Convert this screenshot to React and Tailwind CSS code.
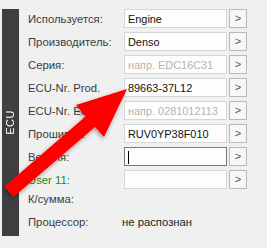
import React from "react";

const rows = [
    { label: "Используется:", value: "Engine" },
    { label: "Производитель:", value: "Denso" },
    { label: "Серия:", placeholder: "напр. EDC16C31" },
    { label: "ECU-Nr. Prod.", value: "89663-37L12" },
    { label: "ECU-Nr. ECU", placeholder: "напр. 0281012113" },
    { label: "Прошивка:", value: "RUV0YP38F010" },
    { label: "Версия:", focused: true },
    { label: "User 11:", green: true },
];

const FieldRow = ({ row }) => (
    <div className="flex items-center h-[19px]">
        <div className={`w-[96px] pt-[3px] whitespace-nowrap ${row.green ? "text-[#1a8a1a]" : "text-[#3c3c3c]"}`}>
            {row.label}
        </div>
        <div
            className={`w-[103px] h-[19px] flex items-center px-[3px] pt-px text-[10.9px] bg-[#fdfdfd] border whitespace-nowrap overflow-hidden ${
                row.focused ? "border-[#7a7a7a]" : "border-[#d6d6d6]"
            }`}
        >
            {row.focused && <span className="w-px h-[13px] bg-black" />}
            {row.value && <span className="text-[#111]">{row.value}</span>}
            {row.placeholder && <span className="text-[#b4b4b4]">{row.placeholder}</span>}
        </div>
        <button className="ml-[2px] w-[18px] h-[19px] flex items-center justify-center bg-[#f7f7f7] border border-[#b9b9b9] text-[#555] text-[11px] leading-none">
            &gt;
        </button>
    </div>
);

const App = () => {
    return (
        <div className="relative w-[267px] h-[248px] bg-[#f0f0f0] overflow-hidden font-['Liberation_Sans',Arial,sans-serif] text-[11.3px] leading-none">
            <div className="flex pt-[9px]">
                {/* side tab */}
                <div className="ml-[2px] w-[17px] h-[227px] bg-[#3f3f3f] flex items-center justify-center">
                    <span className="[writing-mode:vertical-rl] rotate-180 text-white text-[11px] tracking-[0.5px]">ECU</span>
                </div>

                {/* form */}
                <div className="ml-[9px] flex flex-col">
                    <div className="flex flex-col gap-[4px]">
                        {rows.map((row) => (
                            <FieldRow key={row.label} row={row} />
                        ))}
                    </div>
                    <div className="mt-[5px] h-[15px] text-[#3c3c3c]">К/сумма:</div>
                    <div className="mt-[8px] h-[15px] flex text-[#3c3c3c]">
                        <span className="w-[94px]">Процессор:</span>
                        <span className="text-[#222]">не распознан</span>
                    </div>
                </div>
            </div>

            {/* red arrow overlay */}
            <svg
                className="absolute left-0 top-0 pointer-events-none"
                width="267"
                height="248"
                viewBox="0 0 267 248"
            >
                <defs>
                    <filter id="sh" x="-20%" y="-20%" width="140%" height="140%">
                        <feDropShadow dx="-1" dy="2" stdDeviation="2" floodColor="#000" floodOpacity="0.35" />
                    </filter>
                </defs>
                <polygon
                    points="127,89 104,137 95,127 13.5,197 4.5,186.5 85.5,116.5 76,105"
                    fill="#ff0000"
                    filter="url(#sh)"
                />
            </svg>
        </div>
    );
};

export default App;
